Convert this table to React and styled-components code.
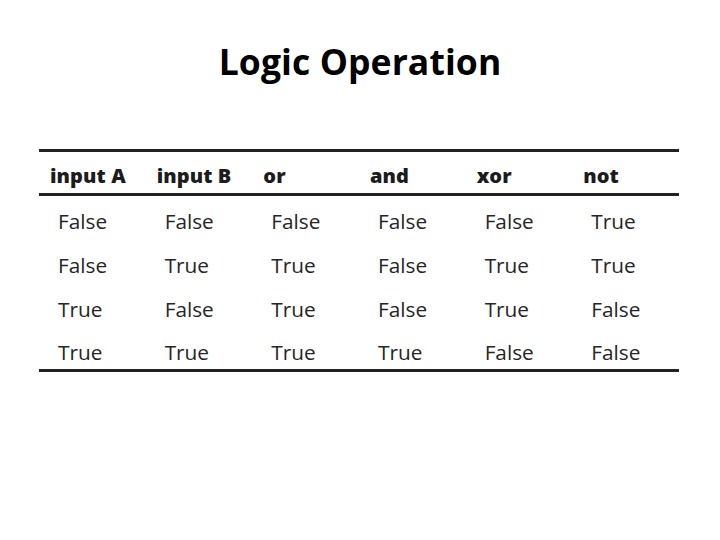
import React from "react";
import styled, { createGlobalStyle } from "styled-components";

const Global = createGlobalStyle`
  html, body { margin: 0; padding: 0; background: #ffffff; }
  body { width: 720px; height: 540px; overflow: hidden; }
`;

const Page = styled.div`
  width: 720px;
  height: 540px;
  display: flex;
  flex-direction: column;
  align-items: center;
  background: #fff;
`;

const Title = styled.h1`
  margin: 0;
  padding-top: 39px;
  font-family: "Open Sans", "Liberation Sans", sans-serif;
  font-weight: 700;
  font-size: 35.5px;
  line-height: 44px;
  letter-spacing: 0.1px;
  color: #000;
`;

const Table = styled.table`
  margin: 66px 2px 0 0;
  width: 640px;
  border-collapse: collapse;
  table-layout: fixed;
  border-top: 3px solid #222;
  border-bottom: 3px solid #222;
  font-family: "Open Sans", "Noto Sans", sans-serif;
`;

const HeadCell = styled.th`
  text-align: left;
  height: 35px;
  padding: 6px 0 0 11px;
  font-size: 20px;
  font-weight: 800;
  color: #1c1c1c;
  letter-spacing: 0.1px;
  border-bottom: 3px solid #222;
  vertical-align: middle;
`;

const Row = styled.tr`
  &:last-child td {
    padding-top: 6px;
    height: 35px;
  }
`;

const Cell = styled.td`
  height: 39px;
  padding: 5px 0 0 19px;
  font-size: 20.8px;
  font-weight: 400;
  color: #262626;
  vertical-align: middle;
`;

const headers = ["input A", "input B", "or", "and", "xor", "not"];
const rows = [
  ["False", "False", "False", "False", "False", "True"],
  ["False", "True", "True", "False", "True", "True"],
  ["True", "False", "True", "False", "True", "False"],
  ["True", "True", "True", "True", "False", "False"],
];

export default function App() {
  return (
    <>
      <Global />
      <Page>
        <Title>Logic Operation</Title>
        <Table>
          <thead>
            <tr>
              {headers.map((h) => (
                <HeadCell key={h}>{h}</HeadCell>
              ))}
            </tr>
          </thead>
          <tbody>
            {rows.map((r, i) => (
              <Row key={i}>
                {r.map((c, j) => (
                  <Cell key={j}>{c}</Cell>
                ))}
              </Row>
            ))}
          </tbody>
        </Table>
      </Page>
    </>
  );
}
